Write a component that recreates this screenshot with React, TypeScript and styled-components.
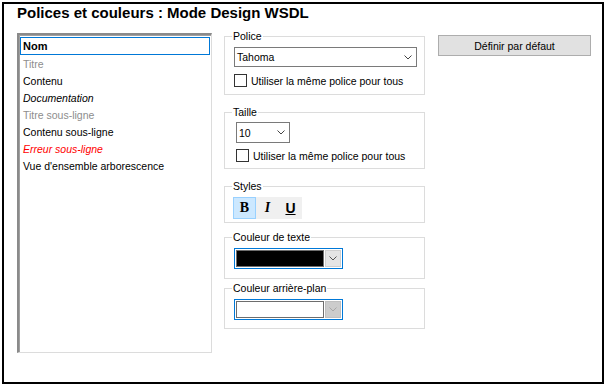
import React from "react";
import styled, { createGlobalStyle } from "styled-components";

const Global = createGlobalStyle`
  html, body { margin: 0; padding: 0; background: #fff; }
  body { font-family: "Liberation Sans", Arial, sans-serif; font-size: 10.5px; color: #000; }
  * { box-sizing: border-box; }
`;

const Frame = styled.div`
  margin: 2px 0 0 2px;
  width: 602px;
  height: 382px;
  border: 2px solid #000;
  background: #fff;
`;

const Title = styled.h1`
  margin: 0 0 0 13px;
  font: bold 15px/17px "Liberation Sans", Arial, sans-serif;
  color: #000;
`;

const Body = styled.div`
  display: flex;
  align-items: flex-start;
  margin-top: 9px;
  padding-left: 13px;
`;

const List = styled.ul`
  list-style: none;
  margin: 3px 0 0 0;
  padding: 2px 1px 0 1px;
  width: 195px;
  height: 320px;
  border-style: solid;
  border-width: 2px 1px 1px 2px;
  border-color: #8a8a8a #dcdcdc #dcdcdc #8a8a8a;
  box-shadow: inset 1px 1px 0 #a0a0a0;
`;

type ItemKind = "sel" | "gray" | "normal" | "italic" | "error";

const Item = styled.li<{ $kind: ItemKind }>`
  height: ${(p) => (p.$kind === "sel" ? 18 : 17)}px;
  line-height: 15px;
  padding: 1px 0 0 2px;
  border: 1px solid ${(p) => (p.$kind === "sel" ? "#0078d7" : "transparent")};
  white-space: nowrap;
  font-weight: ${(p) => (p.$kind === "sel" ? "bold" : "normal")};
  font-size: ${(p) => (p.$kind === "sel" ? "11px" : "10.5px")};
  font-style: ${(p) => (p.$kind === "italic" || p.$kind === "error" ? "italic" : "normal")};
  color: ${(p) =>
    p.$kind === "gray" ? "#8d8d8d" : p.$kind === "error" ? "#ff0000" : "#000"};
`;

const Middle = styled.div`
  margin-left: 12px;
  width: 201px;
  display: flex;
  flex-direction: column;
`;

const Group = styled.fieldset<{ $mt: number; $pb: number }>`
  margin: ${(p) => p.$mt}px 0 0 0;
  padding: 0 7px ${(p) => p.$pb}px 9px;
  border: 1px solid #dcdcdc;
  min-width: 0;
`;

const Legend = styled.legend`
  padding: 0 1px;
  margin-left: -2px;
  font-size: 10.5px;
  line-height: 12px;
  color: #000;
`;

const Content = styled.div<{ $pt: number }>`
  padding-top: ${(p) => p.$pt}px;
  display: flex;
  flex-direction: column;
  align-items: flex-start;
`;

const Select = styled.div<{ $w: number; $h: number }>`
  width: ${(p) => p.$w}px;
  height: ${(p) => p.$h}px;
  border: 1px solid #7a7a7a;
  background: #fff;
  display: flex;
  align-items: center;
  justify-content: space-between;
  padding: 0 4px 0 2px;
  font-size: 10.5px;
`;

const CheckRow = styled.label<{ $mt: number }>`
  margin-top: ${(p) => p.$mt}px;
  display: flex;
  align-items: center;
  height: 13px;
  gap: 4px;
  white-space: nowrap;
`;

const Box = styled.span`
  width: 13px;
  height: 13px;
  border: 1px solid #333;
  background: #fff;
  flex: none;
`;

const Toolbar = styled.div`
  display: flex;
  background: #f0f0f0;
  height: 22px;
  margin-left: -1px;
`;

const ToolBtn = styled.button<{ $active?: boolean; $font: string; $italic?: boolean; $under?: boolean }>`
  width: 23px;
  height: 22px;
  padding: 0;
  margin: 0;
  border: 1px solid ${(p) => (p.$active ? "#99d1ff" : "transparent")};
  background: ${(p) => (p.$active ? "#cce8ff" : "transparent")};
  font-family: ${(p) => p.$font};
  font-weight: bold;
  font-size: 14px;
  font-style: ${(p) => (p.$italic ? "italic" : "normal")};
  text-decoration: ${(p) => (p.$under ? "underline" : "none")};
  color: #000;
  display: flex;
  align-items: center;
  justify-content: center;
`;

const ColorCombo = styled.div`
  width: 109px;
  height: 21px;
  border: 1px solid #0078d7;
  display: flex;
  align-items: stretch;
  padding: 1px;
  gap: 1px;
  background: #fff;
`;

const Swatch = styled.div<{ $color: string }>`
  flex: 1;
  border: 1px solid #6d6d6d;
  background: ${(p) => p.$color};
`;

const DropBtn = styled.div<{ $disabled?: boolean }>`
  width: 16px;
  background: ${(p) => (p.$disabled ? "#cccccc" : "#e5e5e5")};
  border: 1px solid ${(p) => (p.$disabled ? "#bfbfbf" : "#cfcfcf")};
  display: flex;
  align-items: center;
  justify-content: center;
`;

const Right = styled.div`
  margin-left: 13px;
  margin-top: 5px;
`;

const DefaultButton = styled.button`
  width: 153px;
  height: 21px;
  border: 1px solid #adadad;
  background: #e1e1e1;
  font-family: "Liberation Sans", Arial, sans-serif;
  font-size: 10.5px;
  color: #000;
  padding: 0;
`;

const Chevron = ({ color = "#444" }: { color?: string }) => (
  <svg width="8" height="5" viewBox="0 0 8 5">
    <polyline points="0.5,0.5 4,4 7.5,0.5" fill="none" stroke={color} strokeWidth="1" />
  </svg>
);

const items: { label: string; kind: ItemKind }[] = [
  { label: "Nom", kind: "sel" },
  { label: "Titre", kind: "gray" },
  { label: "Contenu", kind: "normal" },
  { label: "Documentation", kind: "italic" },
  { label: "Titre sous-ligne", kind: "gray" },
  { label: "Contenu sous-ligne", kind: "normal" },
  { label: "Erreur sous-ligne", kind: "error" },
  { label: "Vue d'ensemble arborescence", kind: "normal" },
];

export default function App() {
  return (
    <>
      <Global />
      <Frame>
        <Title>Polices et couleurs : Mode Design WSDL</Title>
        <Body>
          <List>
            {items.map((it) => (
              <Item key={it.label} $kind={it.kind}>
                {it.label}
              </Item>
            ))}
          </List>
          <Middle>
            <Group $mt={0} $pb={7}>
              <Legend>Police</Legend>
              <Content $pt={5}>
                <Select $w={183} $h={20}>
                  <span>Tahoma</span>
                  <Chevron />
                </Select>
                <CheckRow $mt={7}>
                  <Box />
                  Utiliser la même police pour tous
                </CheckRow>
              </Content>
            </Group>
            <Group $mt={11} $pb={6}>
              <Legend>Taille</Legend>
              <Content $pt={4}>
                <Select $w={54} $h={21} style={{ marginLeft: 2 }}>
                  <span>10</span>
                  <Chevron />
                </Select>
                <CheckRow $mt={6} style={{ marginLeft: 2 }}>
                  <Box />
                  Utiliser la même police pour tous
                </CheckRow>
              </Content>
            </Group>
            <Group $mt={11} $pb={3}>
              <Legend>Styles</Legend>
              <Content $pt={5}>
                <Toolbar>
                  <ToolBtn $active $font={'"Liberation Serif", serif'}>B</ToolBtn>
                  <ToolBtn $italic $font={'"Liberation Serif", serif'}>I</ToolBtn>
                  <ToolBtn $under $font={'"Liberation Sans", sans-serif'}>U</ToolBtn>
                </Toolbar>
              </Content>
            </Group>
            <Group $mt={8} $pb={9}>
              <Legend>Couleur de texte</Legend>
              <Content $pt={5}>
                <ColorCombo>
                  <Swatch $color="#000" />
                  <DropBtn>
                    <Chevron color="#555" />
                  </DropBtn>
                </ColorCombo>
              </Content>
            </Group>
            <Group $mt={3} $pb={8}>
              <Legend>Couleur arrière-plan</Legend>
              <Content $pt={5}>
                <ColorCombo>
                  <Swatch $color="#fff" />
                  <DropBtn $disabled>
                    <Chevron color="#a8a8a8" />
                  </DropBtn>
                </ColorCombo>
              </Content>
            </Group>
          </Middle>
          <Right>
            <DefaultButton>Définir par défaut</DefaultButton>
          </Right>
        </Body>
      </Frame>
    </>
  );
}
